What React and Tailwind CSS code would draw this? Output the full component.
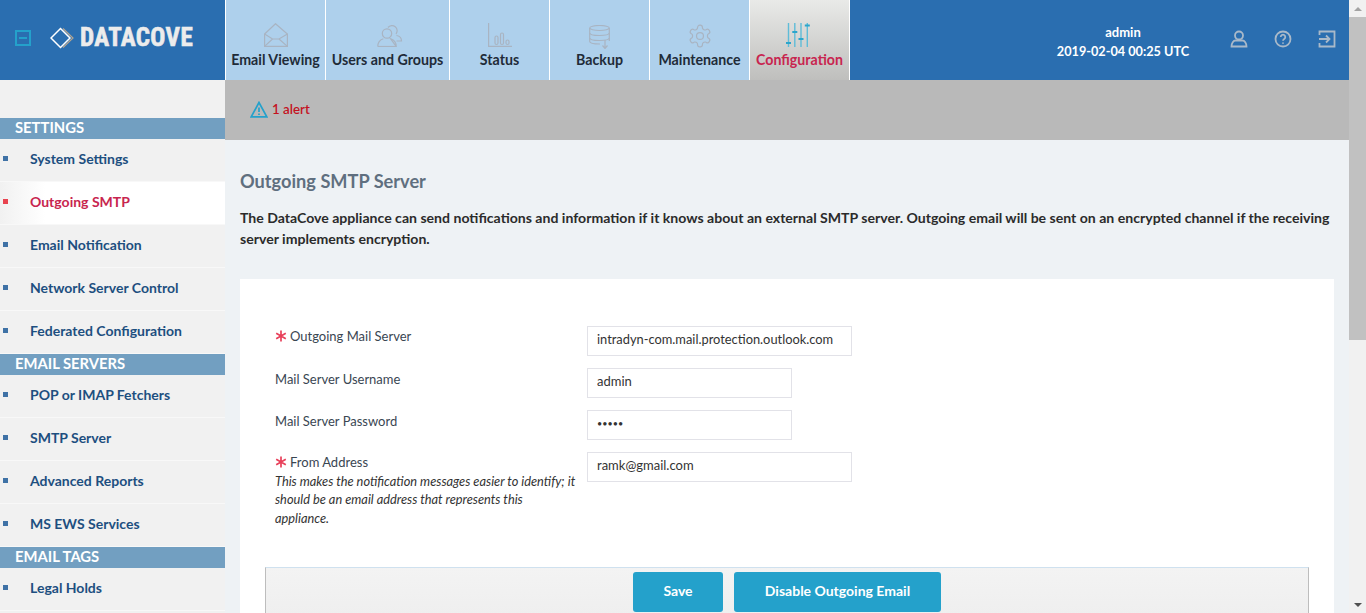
import React from 'react';

const font = "font-['Lato','Open_Sans',sans-serif]";

const MailIcon = () => (
  <svg width="24" height="24" viewBox="0 0 24 24" fill="none" stroke="#a9b4c2" strokeWidth="1.2">
    <path d="M.6 11 11.500.7 23.400 11v12.400H.6z" />
    <path d="M.6 11 8.500 16h6.500l8.400-5M.6 23.400 8.500 16M23.400 23.400 15 16" />
  </svg>
);

const UsersIcon = () => (
  <svg width="26" height="24" viewBox="0 0 26 24" fill="none" stroke="#a9b4c2" strokeWidth="1.2" className="ml-[5px]">
    <circle cx="10" cy="10.500" r="4.700" />
    <path d="M.8 23.500c0-4 2-6.500 5.500-7.700M13.700 15.800c3.500 1.200 5.500 3.700 5.500 7.700z" />
    <path d="M.8 23.500h18.400" />
    <path d="M11 4.500a5 5 0 1 1 8 6.500M19.500 12.500c3 .5 5 2.500 5 5.500h-5" />
  </svg>
);

const StatusIcon = () => (
  <svg width="24" height="24" viewBox="0 0 24 24" fill="none" stroke="#a9b4c2" strokeWidth="1.2">
    <path d="M.6 0v23.400H24" />
    <rect x="7" y="13" width="3" height="8.500" rx="1.500" />
    <rect x="12.500" y="10" width="3" height="11.500" rx="1.500" />
    <rect x="18" y="17" width="3" height="4.500" rx="1.500" />
  </svg>
);

const BackupIcon = () => (
  <svg width="22" height="24" viewBox="0 0 22 24" fill="none" stroke="#a9b4c2" strokeWidth="1.2" className="mt-[2px]">
    <ellipse cx="10.500" cy="3" rx="9.800" ry="2.500" />
    <path d="M.7 3v13.500c0 1.400 3 2.500 10.300 2.500M20.300 3v13" />
    <path d="M.7 8c0 1.400 3.500 2.500 9.800 2.500S20.300 9.400 20.300 8M.7 13c0 1.400 3.500 2.500 9.800 2.500s9.800-1.100 9.800-2.500" />
    <path d="M16 15v8.500M13.500 20.500l2.500 3 2.500-3" />
  </svg>
);

const GearIcon = () => (
  <svg width="26" height="26" viewBox="0 0 24 24" fill="none" stroke="#a9b4c2" strokeWidth="1.1">
    <path d="M12.22 2h-.44a2 2 0 0 0-2 2v.18a2 2 0 0 1-1 1.730l-.43.25a2 2 0 0 1-2 0l-.15-.08a2 2 0 0 0-2.730.73l-.22.38a2 2 0 0 0 .73 2.730l.15.1a2 2 0 0 1 1 1.720v.51a2 2 0 0 1-1 1.740l-.15.09a2 2 0 0 0-.73 2.730l.22.38a2 2 0 0 0 2.730.73l.15-.08a2 2 0 0 1 2 0l.43.25a2 2 0 0 1 1 1.730V20a2 2 0 0 0 2 2h.44a2 2 0 0 0 2-2v-.18a2 2 0 0 1 1-1.730l.43-.25a2 2 0 0 1 2 0l.15.08a2 2 0 0 0 2.730-.73l.22-.39a2 2 0 0 0-.73-2.730l-.15-.08a2 2 0 0 1-1-1.740v-.5a2 2 0 0 1 1-1.740l.15-.09a2 2 0 0 0 .73-2.730l-.22-.38a2 2 0 0 0-2.730-.73l-.15.08a2 2 0 0 1-2 0l-.43-.25a2 2 0 0 1-1-1.730V4a2 2 0 0 0-2-2z" />
    <circle cx="12" cy="12" r="3.200" />
  </svg>
);

const SlidersIcon = () => (
  <svg width="24" height="24" viewBox="0 0 24 24" fill="none" stroke="#5fbcd8" strokeWidth="1.4" className="mr-[3px]">
    <path d="M2.500 0v24M8.800 0v24M15 0v24M21.300 0v24" />
    <path d="M0 20h5M6.300 9h5M12.500 16h5M18.800 2.500h5" strokeWidth="1.8" stroke="#2ba6cc" />
  </svg>
);

const LogoMark = () => (
  <svg width="24" height="22" viewBox="0 0 24 22" fill="none">
    <path d="M13 1.500 23 11 13 20.500" stroke="#b5a58f" strokeWidth="1.2" />
    <path d="M10.500 1.500 1 11l9.500 9.500L20 11z" stroke="#ffffff" strokeWidth="1.5" />
  </svg>
);

const UserGlyph = () => (
  <svg width="18" height="18" viewBox="0 0 18 18" fill="none" stroke="#a9b9c9" strokeWidth="1.8">
    <circle cx="9" cy="5.500" r="4" />
    <path d="M1.500 16.500c0-3.500 2-6 4-6h7c2 0 4 2.500 4 6z" />
  </svg>
);

const HelpGlyph = () => (
  <svg width="18" height="18" viewBox="0 0 18 18" fill="none" stroke="#a9b9c9" strokeWidth="1.8">
    <circle cx="9" cy="9" r="7.500" />
    <path d="M6.700 7a2.300 2.300 0 1 1 3.500 2c-.8.500-1.200.9-1.200 1.800" />
    <path d="M9 12.500v1.300" />
  </svg>
);

const ExitGlyph = () => (
  <svg width="18" height="18" viewBox="0 0 18 18" fill="none" stroke="#a9b9c9" strokeWidth="1.8">
    <path d="M1.500 5V1.500h15v15h-15V13" />
    <path d="M1 9h10M8 5.500 11.500 9 8 12.500" />
  </svg>
);

const Star = () => (
  <svg width="12" height="12" viewBox="0 0 12 12" fill="none" stroke="#e8405a" strokeWidth="1.7" className="mr-[3px] shrink-0">
    <path d="M6 .5v11M1.200 3.200l9.600 5.600M10.800 3.200l-9.600 5.600" />
  </svg>
);

const tabs = [
  { label: 'Email Viewing', w: 'w-[100px]', icon: <MailIcon /> },
  { label: 'Users and Groups', w: 'w-[124px]', icon: <UsersIcon /> },
  { label: 'Status', w: 'w-[100px]', icon: <StatusIcon /> },
  { label: 'Backup', w: 'w-[100px]', icon: <BackupIcon /> },
  { label: 'Maintenance', w: 'w-[100px]', icon: <GearIcon /> },
];

const sections = [
  { title: 'SETTINGS', items: ['System Settings', 'Outgoing SMTP', 'Email Notification', 'Network Server Control', 'Federated Configuration'] },
  { title: 'EMAIL SERVERS', items: ['POP or IMAP Fetchers', 'SMTP Server', 'Advanced Reports', 'MS EWS Services'] },
  { title: 'EMAIL TAGS', items: ['Legal Holds'] },
];

const App = () => {
  return (
    <div className={`flex h-[613px] overflow-hidden ${font}`}>
      <div className="w-[1349px] shrink-0 flex flex-col">
        {/* Top bar */}
        <header className="h-20 flex shrink-0 bg-[#2a6eb0]">
          <div className="w-[225px] flex items-center pl-[15px] pb-[5px]">
            <div className="w-4 h-4 border-2 border-[#24a1cb] flex items-center justify-center mr-[19px]">
              <div className="w-2 h-0.5 bg-[#24a1cb]" />
            </div>
            <LogoMark />
            <span className="ml-[6px] text-[25px] font-bold text-[#ececec] font-['Liberation_Sans_Narrow','Roboto_Condensed','Roboto',sans-serif] tracking-[0.4px] [-webkit-text-stroke:0.6px_#ececec]">DATACOVE</span>
          </div>
          {tabs.map((t) => (
            <div key={t.label} className={`${t.w} h-20 bg-[#aed0ec] border-l border-white flex flex-col items-center pt-[23px]`}>
              <div className="h-[26px]">{t.icon}</div>
              <span className="mt-[1px] text-[14.2px] leading-[20px] font-bold text-[#1f2b38] whitespace-nowrap">{t.label}</span>
            </div>
          ))}
          <div className="w-[100px] h-20 border-l border-white bg-gradient-to-b from-[#e9eae8] to-[#bfbfbd] flex flex-col items-center pt-[23px]">
            <div className="h-[26px]"><SlidersIcon /></div>
            <span className="mt-[1px] text-[14.2px] leading-[20px] font-bold text-[#c8254f] whitespace-nowrap">Configuration</span>
          </div>
          <div className="w-px bg-white" />
          <div className="flex-1 flex items-center pt-[2px]">
            <div className="ml-[206px] w-[134px] text-center text-white leading-[18px] font-bold">
              <div className="text-[13px]">admin</div>
              <div className="text-[12.7px] mt-[1px] whitespace-nowrap">2019-02-04 00:25 UTC</div>
            </div>
            <div className="ml-[40px] mb-[4px] flex items-center gap-[26px]">
              <UserGlyph />
              <HelpGlyph />
              <ExitGlyph />
            </div>
          </div>
        </header>

        <div className="flex flex-1 min-h-0">
          {/* Sidebar */}
          <aside className="w-[225px] shrink-0 bg-[#f1f1f1] pt-[38px] overflow-hidden">
            {sections.map((s) => (
              <div key={s.title}>
                <div className="h-[21px] bg-[#729fc1] pl-[15px] text-white text-[14.8px] leading-[19px] font-bold">{s.title}</div>
                {s.items.map((item) => {
                  const active = item === 'Outgoing SMTP';
                  return (
                    <div key={item} className={`h-[43px] flex items-center border-b border-[#f8f8f8] pb-[4px] ${active ? 'bg-gradient-to-r from-[#f1f1f1] to-white to-[20%]' : ''}`}>
                      <div className={`ml-[3px] w-[5px] h-[5px] ${active ? 'bg-[#e8434f]' : 'bg-[#3f72a6]'}`} />
                      <span className={`ml-[22px] text-[14px] font-bold ${active ? 'text-[#c8254f]' : 'text-[#1d4f80]'}`}>{item}</span>
                    </div>
                  );
                })}
              </div>
            ))}
          </aside>

          <main className="flex-1 min-w-0 bg-[#eef2f5] overflow-hidden">
            <div className="h-[60px] bg-[#b9b9b9] flex items-center pl-[25px] pb-[1px]">
              <svg width="18" height="17" viewBox="0 0 18 17" fill="none" stroke="#24a1cb" strokeWidth="1.7">
                <path d="M9 1.500 1.200 15.800h15.600z" />
                <path d="M9 6.500v4.500M9 12.500v1.500" />
              </svg>
              <span className="ml-[4px] text-[13.3px] leading-[16px] pb-[1px] font-semibold text-[#c4121f]">1 alert</span>
            </div>

            <div className="pl-[15px] pr-[15px] pt-[30px]">
              <h1 className="text-[18.2px] leading-[22px] font-bold text-[#5f6f7f]">Outgoing SMTP Server</h1>
              <p className="mt-[15px] text-[14.08px] leading-[21px] font-bold text-[#2b2b2b]">
                The DataCove appliance can send notifications and information if it knows about an external SMTP server. Outgoing email will be sent on an encrypted channel if the receiving server implements encryption.
              </p>

              <div className="mt-[30px] bg-white pt-[47px] px-[25px]">
                <div className="pl-[10px] text-[13px] text-[#3a4652]">
                  <div className="flex h-[42px]">
                    <div className="w-[312px] leading-[20px] flex items-center h-[20px]"><Star />Outgoing Mail Server</div>
                    <input readOnly value="intradyn-com.mail.protection.outlook.com" className="w-[265px] h-[30px] border border-[#e2e2e8] px-[9px] pb-[5px] text-[12.85px] text-[#333]" />
                  </div>
                  <div className="flex h-[42px]">
                    <div className="w-[312px] pt-[1px] leading-[20px]">Mail Server Username</div>
                    <input readOnly value="admin" className="w-[205px] h-[30px] border border-[#e2e2e8] px-[9px] pb-[5px] text-[#333]" />
                  </div>
                  <div className="flex h-[42px]">
                    <div className="w-[312px] pt-[1px] leading-[20px]">Mail Server Password</div>
                    <input readOnly type="password" value="admin" className="w-[205px] h-[30px] border border-[#e2e2e8] px-[9px] pb-[3px] text-[9px] text-[#333]" />
                  </div>
                  <div className="flex h-[85px]">
                    <div className="w-[312px] leading-[20px]">
                      <div className="flex items-center h-[20px]"><Star />From Address</div>
                      <div className="w-[303px] text-[12.8px] leading-[18.3px] italic text-[#333]">
                        This makes the notification messages easier to identify; it should be an email address that represents this appliance.
                      </div>
                    </div>
                    <input readOnly value="ramk@gmail.com" className="w-[265px] h-[30px] border border-[#e2e2e8] px-[9px] pb-[5px] text-[#333]" />
                  </div>
                </div>

                <div className="mt-[30px] h-[60px] border-t border-t-[#cfe1ef] border-x border-x-[#bdbdbd] bg-gradient-to-b from-[#f3f3f3] to-[#eeeeee] flex justify-center gap-[11px] pt-[4px]">
                  <button className="w-[90px] h-10 rounded-[3px] bg-[#24a1cb] text-white text-[14px] font-bold pb-[3px]">Save</button>
                  <button className="w-[207px] h-10 rounded-[3px] bg-[#24a1cb] text-white text-[14px] font-bold pb-[3px]">Disable Outgoing Email</button>
                </div>
              </div>
            </div>
          </main>
        </div>
      </div>

      {/* Browser scrollbar */}
      <div className="w-[17px] shrink-0 bg-[#f1f1f1] flex flex-col items-center">
        <div className="h-[17px] flex items-center justify-center">
          <div className="w-0 h-0 border-x-[4px] border-x-transparent border-b-[4px] border-b-[#a3a3a3]" />
        </div>
        <div className="w-full h-[323px] bg-[#c1c1c1]" />
        <div className="flex-1" />
        <div className="h-[17px] flex items-center justify-center">
          <div className="w-0 h-0 border-x-[4px] border-x-transparent border-t-[4px] border-t-[#505050]" />
        </div>
      </div>
    </div>
  );
};

export default App;
